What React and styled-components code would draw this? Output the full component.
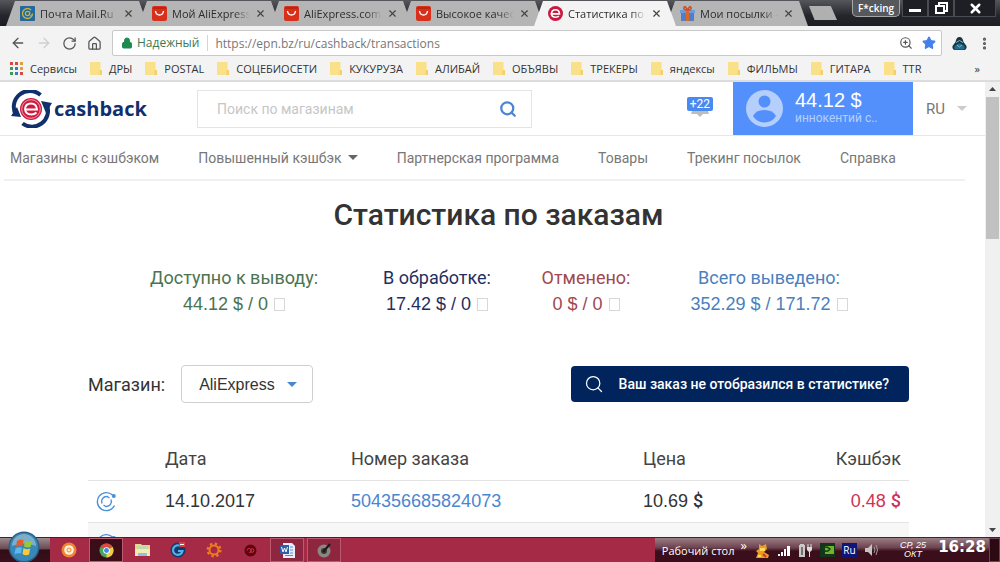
import React from 'react';
import styled, { createGlobalStyle, css } from 'styled-components';
import { ArrowLeft, ArrowRight, RotateCw, House, Lock, Star, ZoomIn, X, Search, EllipsisVertical } from 'lucide-react';

const GlobalStyle = createGlobalStyle`
  * {
    box-sizing: border-box;
  }

  body {
    margin: 0;
    background: #fff;
    font-family: Roboto, 'Liberation Sans', sans-serif;
    color: #333;
  }

  button, input, select {
    font: inherit;
    color: inherit;
    margin: 0;
    padding: 0;
    border: 0;
    background: none;
  }

  a {
    color: inherit;
    text-decoration: none;
  }
`;

const uiFont = css`
  font-family: 'Open Sans', 'Noto Sans', sans-serif;
`;

const Screen = styled.div`
  display: flex;
  flex-direction: column;
  height: 100vh;
  overflow: hidden;
`;

/* ---------- browser chrome ---------- */

const TabStrip = styled.div`
  ${uiFont}
  display: flex;
  align-items: flex-end;
  flex: none;
  height: 26px;
  padding-left: 6px;
  background: linear-gradient(#55575c, #24262b 60%, #1c1e24);
`;

const Tab = styled.div`
  display: flex;
  align-items: center;
  gap: 5px;
  flex: none;
  width: 142px;
  height: 25px;
  margin-right: -10px;
  padding: 0 14px;
  font-size: 11px;
  color: #2d2d2d;
  background: ${({ $active }) => ($active ? '#f3f3f3' : '#b5b5b5')};
  clip-path: polygon(0 100%, 9px 0, calc(100% - 9px) 0, 100% 100%);
  position: relative;
  z-index: ${({ $active }) => ($active ? 1 : 0)};
`;

const TabTitle = styled.button`
  flex: 1;
  min-width: 0;
  text-align: left;
  white-space: nowrap;
  overflow: hidden;
  mask-image: linear-gradient(to right, #000 80%, transparent);
`;

const TabClose = styled.button`
  display: flex;
  color: #444;
`;

const NewTab = styled.button`
  align-self: center;
  width: 28px;
  height: 14px;
  margin-left: 11px;
  background: #b0b0b0;
  clip-path: polygon(0 0, 78% 0, 100% 100%, 20% 100%);
`;

const WindowButtons = styled.div`
  display: flex;
  align-self: flex-start;
  margin-left: auto;
  margin-right: 4px;
`;

const UserBadge = styled.button`
  width: 48px;
  height: 17px;
  margin-right: 2px;
  border: 1px solid #a5a5a5;
  border-top: 0;
  border-radius: 0 0 5px 5px;
  background: #56585c;
  color: #fff;
  font-size: 10px;
  font-weight: 600;
  line-height: 15px;
`;

const WindowButton = styled.button`
  display: flex;
  align-items: center;
  justify-content: center;
  width: ${({ $wide }) => ($wide ? 42 : 26)}px;
  height: 17px;
  border: 1px solid #4a4c52;
  border-top: 0;
  background: #1d1f25;
  color: #fff;
`;

const Toolbar = styled.div`
  ${uiFont}
  display: flex;
  align-items: center;
  flex: none;
  height: 32px;
  padding: 2px 8px 0 10px;
  gap: 10px;
  background: #f3f3f3;
`;

const ToolButton = styled.button`
  display: flex;
  color: ${({ $dim }) => ($dim ? '#cfcfcf' : '#555')};
`;

const AddressBar = styled.div`
  display: flex;
  align-items: center;
  flex: 1;
  height: 26px;
  padding: 0 5px 0 8px;
  border: 1px solid #c9c9c9;
  border-radius: 2px;
  background: #fff;
  font-size: 12px;
  color: #3b7a55;
`;

const Secure = styled.span`
  padding: 0 8px 0 4px;
  margin-right: 7px;
  border-right: 1px solid #d5d5d5;
  line-height: 16px;
`;

const AddressInput = styled.input`
  flex: 1;
  min-width: 0;
  outline: none;
  color: #777;
`;

const AddressIcons = styled.div`
  display: flex;
  gap: 9px;
`;

const Bookmarks = styled.nav`
  ${uiFont}
  display: flex;
  align-items: center;
  flex: none;
  gap: 13px;
  height: 24px;
  padding: 0 20px 2px 10px;
  border-bottom: 2px solid #dcdcdc;
  background: #f3f3f3;
  font-size: 11px;
  white-space: nowrap;
`;

const Bookmark = styled.a`
  display: flex;
  align-items: center;
  gap: 7px;
`;

const More = styled.button`
  margin-left: auto;
`;

/* ---------- page ---------- */

const Viewport = styled.div`
  display: flex;
  flex: 1;
  min-height: 0;
`;

const Page = styled.div`
  flex: 1;
  min-width: 0;
  overflow: hidden;
`;

const Scrollbar = styled.div`
  display: flex;
  flex-direction: column;
  align-items: center;
  width: 15px;
  padding: 5px 1px;
  background: #f0f0f0;
`;

const ScrollThumb = styled.div`
  width: 100%;
  height: 32%;
  margin: 6px 0 auto;
  background: #c1c1c1;
`;

const Header = styled.header`
  display: flex;
  align-items: center;
  height: 54px;
  border-bottom: 1px solid #e6e6e6;
`;

const Logo = styled.a`
  display: flex;
  align-items: center;
  gap: 2px;
  width: 197px;
  padding-left: 11px;
  font-family: 'Open Sans', sans-serif;
  font-size: 20px;
  font-weight: 700;
  color: #10306b;
`;

const SearchBox = styled.form`
  display: flex;
  align-items: center;
  width: 335px;
  height: 38px;
  padding: 0 14px 0 19px;
  border: 1px solid #e4e4e4;
  color: #4a86cf;
`;

const SearchInput = styled.input`
  flex: 1;
  min-width: 0;
  outline: none;
  font-size: 14px;

  &::placeholder {
    color: #c6c6c6;
  }
`;

const SearchButton = styled.button`
  display: flex;
`;

const Notice = styled.button`
  display: flex;
  flex-direction: column;
  align-items: center;
  margin-left: auto;
  margin-right: 20px;
  padding-bottom: 4px;
`;

const NoticeCount = styled.span`
  padding: 0 3px;
  border-radius: 2px;
  background: #4a8af0;
  color: #fff;
  font-size: 12px;
  line-height: 14px;
`;

const Account = styled.a`
  display: flex;
  align-items: center;
  gap: 12px;
  width: 180px;
  height: 100%;
  padding-left: 13px;
  background: #5490fb;
  color: #b4cffb;
  font-size: 12px;
  line-height: 14px;
`;

const AccountText = styled.div`
  padding-bottom: 4px;
`;

const Balance = styled.div`
  font-family: 'Liberation Sans', sans-serif;
  font-size: 20px;
  line-height: 22px;
  color: #fff;
`;

const Language = styled.button`
  display: flex;
  align-items: center;
  gap: 12px;
  width: 72px;
  padding-left: 13px;
  font-size: 15px;
  color: #777;
`;

const MainNav = styled.nav`
  display: flex;
  align-items: center;
  gap: 39px;
  height: 45px;
  margin: 0 20px 0 4px;
  padding-left: 6px;
  border-bottom: 2px solid #f0f0f0;
  font-size: 14px;
  color: #777;
  white-space: nowrap;
`;

const NavItem = styled.a`
  display: flex;
  align-items: center;
  gap: 6px;
`;

const Caret = styled.span`
  border: 5px solid transparent;
  border-top-color: ${({ $color }) => $color};
  border-bottom: 0;
`;

const Content = styled.main`
  padding: 0 76px 0 88px;
`;

const Title = styled.h1`
  margin: 16px 0 0;
  font-size: 30px;
  font-weight: 500;
  line-height: 36px;
  text-align: center;
`;

const Stats = styled.div`
  display: grid;
  grid-template-columns: 240fr 166fr 132fr 234fr;
  margin-top: 32px;
  padding: 0 23px 0 26px;
`;

const Stat = styled.div`
  color: ${({ $color }) => $color};
  font-size: 18px;
  line-height: 26px;
  text-align: center;
  white-space: nowrap;
`;

const StatValue = styled.div`
  display: flex;
  align-items: center;
  justify-content: center;
  gap: 6px;
  font-family: 'Liberation Sans', sans-serif;
`;

const CurrencyBox = styled.span`
  width: 11px;
  height: 13px;
  border: 1px solid #d8d8d8;
`;

const Filters = styled.div`
  display: flex;
  align-items: center;
  margin-top: 48px;
  font-size: 18px;
`;

const ShopSelect = styled.div`
  position: relative;
  margin-left: 16px;

  select {
    appearance: none;
    width: 132px;
    height: 38px;
    padding-left: 17px;
    border: 1px solid #cfcfcf;
    border-radius: 4px;
    background: #fff;
    font-family: 'Liberation Sans', sans-serif;
    font-size: 16px;
  }

  span {
    position: absolute;
    right: 16px;
    top: 17px;
    pointer-events: none;
  }
`;

const LostOrder = styled.button`
  display: flex;
  align-items: center;
  gap: 15px;
  height: 36px;
  margin-left: auto;
  padding: 0 20px 0 13px;
  border-radius: 4px;
  background: #02245c;
  color: #fff;
  font-size: 14px;
  font-weight: 500;
`;

const Orders = styled.table`
  width: 100%;
  margin-top: 35px;
  border-collapse: collapse;
  table-layout: fixed;
  font-size: 18px;
  text-align: left;

  th {
    height: 42px;
    padding: 0;
    font-weight: 400;
    color: #444;
  }

  td {
    height: 42px;
    padding: 0;
    border-top: 1px solid #e3e3e3;
    font-family: 'Liberation Sans', sans-serif;
  }

  th:last-child, td:last-child {
    padding-right: 8px;
    text-align: right;
  }

  tbody tr:nth-child(even) {
    background: #f7f7f7;
  }

  svg {
    display: block;
    margin-left: 8px;
  }
`;

const OrderLink = styled.a`
  color: #4a86cf;
`;

const Cashback = styled.span`
  color: #cf3355;
`;

const Dollar = styled.b`
  font-family: Roboto, sans-serif;
  font-weight: 500;
`;

/* ---------- taskbar ---------- */

const Taskbar = styled.footer`
  ${uiFont}
  display: flex;
  flex: none;
  height: 25px;
  border-top: 1px solid #4f1c28;
  background: #a52a46;
  color: #fff;
`;

const StartArea = styled.div`
  display: flex;
  width: 50px;
  padding-left: 8px;
  background: linear-gradient(#9b8a8e, #6a4a52 45%, #310d17 50%, #3a101c);
`;

const StartButton = styled.button`
  display: flex;
  margin-top: -7px;
  height: 32px;
`;

const TaskButton = styled.button`
  display: flex;
  align-items: center;
  justify-content: center;
  width: 34px;
  margin-left: ${({ $open }) => ($open ? 3 : 2)}px;
  border: 1px solid ${({ $open }) => ($open ? '#bb5a70' : 'transparent')};
  background: ${({ $active, $open }) => ($active ? '#3a0d18' : $open ? '#8f2640' : 'none')};
`;

const Tray = styled.div`
  display: flex;
  align-items: center;
  margin-left: auto;
  padding-left: 7px;
  background: linear-gradient(#9b7f86, #6d4350 40%, #3a0f1b 55%, #3a0f1b);
  font-size: 11px;
  white-space: nowrap;
`;

const TrayIcons = styled.div`
  display: flex;
  align-items: center;
  gap: 7px;
  margin: 0 19px 0 8px;
`;

const Chevron = styled.span`
  align-self: flex-start;
  margin-left: 6px;
  font-size: 13px;
  line-height: 14px;
`;

const Layout = styled.span`
  width: 15px;
  background: #10157c;
  font-size: 10px;
  line-height: 14px;
  text-align: center;
`;

const TrayDate = styled.div`
  display: flex;
  flex-direction: column;
  width: 30px;
  font-family: 'Liberation Sans', sans-serif;
  font-size: 9px;
  font-style: italic;
  line-height: 9px;
  text-align: center;
`;

const Clock = styled.div`
  width: 54px;
  margin-left: 7px;
  padding-bottom: 6px;
  font-family: 'DejaVu Sans', sans-serif;
  font-size: 15px;
  font-weight: 700;
  line-height: 18px;
  text-align: center;
`;

const ShowDesktop = styled.button`
  align-self: stretch;
  width: 11px;
  border: 1px solid #6d4350;
  background: #2c0a14;
`;

/* ---------- icons ---------- */

const MailIcon = () => (
  <svg width="15" height="15" viewBox="0 0 15 15">
    <rect width="15" height="15" rx="1" fill="#23689f" />
    <circle cx="7.5" cy="7.5" r="5" fill="none" stroke="#c9b23c" strokeWidth="1.3" strokeDasharray="27 5" />
    <circle cx="7.5" cy="7.5" r="2.1" fill="none" stroke="#c9b23c" strokeWidth="1.3" />
    <path d="M9.7 5.5v3q.6 1.7 2.2.3" fill="none" stroke="#c9b23c" />
  </svg>
);

const AliIcon = () => (
  <svg width="15" height="15" viewBox="0 0 15 15">
    <rect width="15" height="15" rx="2" fill="#d9301b" />
    <path d="M1 1h13v2H1z" fill="#b92712" />
    <path d="M3.5 5q.5 4 4 4t4-4" fill="none" stroke="#fff" strokeWidth="1.4" />
  </svg>
);

const EpnIcon = () => (
  <svg width="15" height="15" viewBox="0 0 15 15">
    <circle cx="7.5" cy="7.5" r="7.5" fill="#cc1840" />
    <path d="M2.500 7.900h9q-.2-4.200-4-4.200T3.600 7.500t4.200 3.800q2 0 3-1.200" fill="none" stroke="#fff" strokeWidth="1.600" />
  </svg>
);

const GiftIcon = () => (
  <svg width="15" height="15" viewBox="0 0 15 15">
    <rect x="1" y="6" width="13" height="9" fill="#4f7fc4" />
    <rect y="4" width="15" height="3" fill="#6f9ad6" />
    <rect x="6" y="4" width="3" height="11" fill="#d9682f" />
    <path d="M7.500 4Q3 4 4 1.500T7.500 4Q12 4 11 1.500T7.500 4z" fill="none" stroke="#c9502a" strokeWidth="1.5" />
  </svg>
);

const AppsIcon = () => {
  const colors = ['#d64b3c', '#d64b3c', '#e0a03a', '#3c9b5c', '#3f78c9', '#e0a03a', '#3c9b5c', '#3f78c9', '#d64b3c'];
  return (
    <svg width="13" height="13" viewBox="0 0 13 13">
      {colors.map((c, i) => (
        <rect key={i} x={(i % 3) * 5} y={Math.floor(i / 3) * 5} width="3" height="3" fill={c} />
      ))}
    </svg>
  );
};

const FolderIcon = () => (
  <svg width="12" height="13" viewBox="0 0 12 13">
    <path d="M0 0h10.500v8H12v5H0z" fill="#fbe08a" />
    <path d="M9.500 8H12v5H9.500z" fill="#f2d06c" />
  </svg>
);

const ExtensionIcon = () => (
  <svg width="15" height="15" viewBox="0 0 15 15">
    <path d="M7.500 1C10 1 11 3 11.500 6l3 4q.5 3-2 4h-10q-2.500-1-2-4l3-4C4 3 5 1 7.500 1z" fill="#1b3442" />
    <path d="M2.500 10l5-3 5 3v3.500h-10z" fill="#1c6d98" />
    <path d="M4 6.500l3.500-2 3.500 2M5 9l2.500 2L10 9" fill="none" stroke="#8eb5c4" />
  </svg>
);

const LogoMark = () => (
  <svg width="41" height="38" viewBox="0 0 41 38">
    <path d="M5 25A16 16 0 0 1 29.500 5" fill="none" stroke="#10306b" strokeWidth="4" />
    <path d="M36 15A16 16 0 0 1 11.500 33.500" fill="none" stroke="#10306b" strokeWidth="4" />
    <path d="M0 26l10 1-4-10zM30 11l11 2-6 10z" fill="#10306b" />
    <circle cx="20" cy="19" r="11" fill="#d0193d" />
    <circle cx="20" cy="19" r="9.300" fill="none" stroke="#f3c4cd" strokeWidth=".8" />
    <path d="M14 19.500h12q-.5-6-6-6t-6 5.500q.5 5.500 6.500 5.500 3 0 5-2" fill="none" stroke="#fff" strokeWidth="2" />
  </svg>
);

const AvatarIcon = () => (
  <svg width="37" height="37" viewBox="0 0 37 37">
    <circle cx="18.500" cy="18.500" r="18.500" fill="#b4cffb" />
    <circle cx="18.500" cy="11.500" r="6" fill="#5490fb" />
    <path d="M7 26q3-6 11.500-6T30 26q-4 6.500-11.500 6.500T7 26z" fill="#5490fb" />
  </svg>
);

const StatusIcon = () => (
  <svg width="21" height="21" viewBox="0 0 21 21" fill="none" stroke="#4a90d9" strokeWidth="1.400">
    <path d="M16.500 4A9 9 0 1 0 18.500 14.500" />
    <circle cx="17.800" cy="5" r="1.300" fill="#4a90d9" />
    <path d="M6 12.500a5 5 0 0 1 5-7l2.500 1.500M15 8.500a5 5 0 0 1-5 7L7.500 14" />
  </svg>
);

const WindowsOrb = () => (
  <svg width="32" height="32" viewBox="0 0 32 32">
    <circle cx="16" cy="16" r="15.500" fill="#2e5f86" />
    <circle cx="16" cy="16" r="14" fill="#3688b8" />
    <path d="M4 15a12 12 0 0 1 24 0q-12-5-24 0z" fill="#8fb8cc" opacity=".8" />
    <path d="M9 10q3-2.500 6.500-1l-1 6Q11 14 8 16z" fill="#e8592b" />
    <path d="M17 9.500q3 2 7 .5l-1.500 6q-3 1-6.500-.500z" fill="#97c93d" />
    <path d="M7.500 17.500q3-2 6.500-1l-1 6q-3.500-1-6.500 1z" fill="#5fb8ea" />
    <path d="M15.500 17q3.500 2 6.700.6l-1.200 6q-3.500 1.400-6.500-.600z" fill="#f9ca3a" />
  </svg>
);

const OrangeDisc = () => (
  <svg width="16" height="16" viewBox="0 0 16 16">
    <circle cx="8" cy="8" r="7.500" fill="#ef8532" />
    <circle cx="8" cy="8" r="4.800" fill="#fff0d8" />
    <circle cx="8" cy="8" r="2" fill="none" stroke="#ef8532" />
  </svg>
);

const ChromeIcon = () => (
  <svg width="15" height="15" viewBox="0 0 16 16">
    <circle cx="8" cy="8" r="7.500" fill="#45a85a" />
    <path d="M8 8L1.500 4.300A7.500 7.500 0 0 1 14.500 4.300z" fill="#dd4b3e" />
    <path d="M8 8l6.500-3.700A7.500 7.500 0 0 1 8 15.500z" fill="#f4cb3f" />
    <circle cx="8" cy="8" r="3.500" fill="#fff" />
    <circle cx="8" cy="8" r="2.600" fill="#4286e8" />
  </svg>
);

const ExplorerIcon = () => (
  <svg width="17" height="14" viewBox="0 0 17 14">
    <path d="M1 1h6l1 1h8v11H1z" fill="#e9d58c" />
    <path d="M3 3h11v4H3z" fill="#b7ddb0" />
    <path d="M1 6h15v7H1z" fill="#f6e9b1" />
    <path d="M4 10h9v3H4z" fill="#91bfdf" />
  </svg>
);

const CIcon = () => (
  <svg width="16" height="16" viewBox="0 0 16 16">
    <circle cx="8" cy="8" r="7.500" fill="#143b6e" />
    <path d="M11 4.500A4.800 4.800 0 1 0 12.500 9H8" fill="none" stroke="#58aee8" strokeWidth="2.200" />
    <path d="M9 0h6v5H9z" fill="#d9414a" />
    <path d="M10 2.500h4" stroke="#fff" />
  </svg>
);

const GearIcon = () => (
  <svg width="16" height="16" viewBox="0 0 16 16" fill="none" stroke="#ee7a22">
    <circle cx="8" cy="8" r="4.500" strokeWidth="2" />
    <circle cx="8" cy="8" r="6.300" strokeWidth="2.400" strokeDasharray="2.400 2.550" />
  </svg>
);

const DarkDisc = () => (
  <svg width="13" height="13" viewBox="0 0 13 13">
    <circle cx="6.500" cy="6.500" r="6" fill="#5d0612" />
    <path d="M3 6.500a2 2 0 1 1 2 2M7 9V5q3-1 3 1.500T7 8" fill="none" stroke="#db2635" />
  </svg>
);

const WordIcon = () => (
  <svg width="15" height="15" viewBox="0 0 15 15">
    <path d="M3 0h9l3 3v12H3z" fill="#e9eff9" />
    <path d="M10 4h3M10 7h3M10 10h3M5 12.500h8" stroke="#6189c4" />
    <rect y="2" width="9" height="9" fill="#2d5eac" />
    <path d="M1.500 4l1.500 5 1.500-4L6 9l1.500-5" fill="none" stroke="#fff" />
  </svg>
);

const PenDisc = () => (
  <svg width="15" height="15" viewBox="0 0 15 15">
    <circle cx="7" cy="8" r="6.500" fill="#8a8680" />
    <circle cx="7" cy="8" r="3" fill="#3b3836" />
    <path d="M6 9l7-8" stroke="#191919" strokeWidth="2" />
  </svg>
);

const CatIcon = () => (
  <svg width="15" height="15" viewBox="0 0 15 15">
    <path d="M4 1l3 2 4-2 1 5-3 3 5 3-1 3H1l2-5-2-2 3-2z" fill="#f09a20" />
    <path d="M5 5h5v3H5zM3 12h3v2H3z" fill="#fbd75b" />
    <path d="M8 11l3 3" stroke="#cd3a1d" strokeWidth="2" />
  </svg>
);

const SignalIcon = () => (
  <svg width="14" height="12" viewBox="0 0 14 12" fill="#fff">
    <path d="M1 10h2v2H1zM4 8h2v4H4zM7 5h2v7H7zM10 2h3v10h-3z" />
  </svg>
);

const PowerIcon = () => (
  <svg width="15" height="14" viewBox="0 0 15 14">
    <path d="M2 1h4v1h1v12H1V2h1z" fill="#c9c9c9" />
    <path d="M3 4h2v8H3z" fill="#76706f" />
    <path d="M10 1v4M13 1v4" fill="none" stroke="#ddd" />
    <path d="M9 4h5v3l-2 2v5h-1V9L9 7z" fill="#ddd" />
  </svg>
);

const NvidiaIcon = () => (
  <svg width="15" height="14" viewBox="0 0 15 14">
    <rect width="15" height="14" fill="#13361a" />
    <path d="M5 3h9v8H5z" fill="#6fb42c" />
    <path d="M2 6q4-4 8 0-3 4-6 1" fill="none" stroke="#173d16" strokeWidth="1.500" />
  </svg>
);

const SpeakerIcon = () => (
  <svg width="15" height="14" viewBox="0 0 15 14">
    <path d="M1 5h3l4-4v12L4 9H1z" fill="#c7c2c3" />
    <path d="M10 4q2 3 0 6M12 2q3 5 0 10" fill="none" stroke="#a39a9c" />
  </svg>
);

const tabs = [
  { title: 'Почта Mail.Ru', icon: MailIcon },
  { title: 'Мой AliExpress', icon: AliIcon },
  { title: 'AliExpress.com', icon: AliIcon },
  { title: 'Высокое качес', icon: AliIcon },
  { title: 'Статистика по', icon: EpnIcon, active: true },
  { title: 'Мои посылки -', icon: GiftIcon },
];

const bookmarks = ['ДРЫ', 'POSTAL', 'СОЦЕБИОСЕТИ', 'КУКУРУЗА', 'АЛИБАЙ', 'ОБЪЯВЫ', 'ТРЕКЕРЫ', 'яндексы', 'ФИЛЬМЫ', 'ГИТАРА', 'TTR'];

const navItems = [
  { label: 'Магазины с кэшбэком' },
  { label: 'Повышенный кэшбэк', menu: true },
  { label: 'Партнерская программа' },
  { label: 'Товары' },
  { label: 'Трекинг посылок' },
  { label: 'Справка' },
];

const stats = [
  { label: 'Доступно к выводу:', value: '44.12 $ / 0', color: '#4a7350' },
  { label: 'В обработке:', value: '17.42 $ / 0', color: '#1f2f5f' },
  { label: 'Отменено:', value: '0 $ / 0', color: '#a04850' },
  { label: 'Всего выведено:', value: '352.29 $ / 171.72', color: '#4a80bd' },
];

const tasks = [
  { name: 'Плеер', icon: OrangeDisc },
  { name: 'Chrome', icon: ChromeIcon, open: true, active: true },
  { name: 'Проводник', icon: ExplorerIcon },
  { name: 'CCleaner', icon: CIcon },
  { name: 'Настройки', icon: GearIcon },
  { name: 'Запись', icon: DarkDisc },
  { name: 'Word', icon: WordIcon, open: true },
  { name: 'Редактор', icon: PenDisc, open: true },
];

export default function App() {
  return (
    <Screen>
      <GlobalStyle />

      <TabStrip>
        {tabs.map(({ title, icon: Icon, active }) => (
          <Tab key={title} $active={active}>
            <Icon />
            <TabTitle>{title}</TabTitle>
            <TabClose aria-label="Закрыть"><X size={11} strokeWidth={2.5} /></TabClose>
          </Tab>
        ))}
        <NewTab aria-label="Новая вкладка" />
        <WindowButtons>
          <UserBadge>F*cking</UserBadge>
          <WindowButton aria-label="Свернуть">
            <svg width="12" height="10"><path d="M0 6h12v3H0z" fill="#fff" /></svg>
          </WindowButton>
          <WindowButton aria-label="Развернуть">
            <svg width="13" height="12" fill="none" stroke="#fff" strokeWidth="2">
              <path d="M4 3V1h8v8h-2M1 4h8v7H1z" />
            </svg>
          </WindowButton>
          <WindowButton aria-label="Закрыть окно" $wide>
            <X size={15} strokeWidth={4} />
          </WindowButton>
        </WindowButtons>
      </TabStrip>

      <Toolbar>
        <ToolButton aria-label="Назад"><ArrowLeft size={16} /></ToolButton>
        <ToolButton aria-label="Вперед" $dim><ArrowRight size={16} /></ToolButton>
        <ToolButton aria-label="Обновить"><RotateCw size={15} /></ToolButton>
        <ToolButton aria-label="Домой"><House size={15} /></ToolButton>
        <AddressBar>
          <Lock size={12} fill="#1f8a50" color="#1f8a50" />
          <Secure>Надежный</Secure>
          <AddressInput aria-label="Адрес" defaultValue="https://epn.bz/ru/cashback/transactions" />
          <AddressIcons>
            <ZoomIn size={14} color="#555" />
            <Star size={14} fill="#4580ea" color="#4580ea" />
          </AddressIcons>
        </AddressBar>
        <ToolButton aria-label="Расширение"><ExtensionIcon /></ToolButton>
        <ToolButton aria-label="Меню"><EllipsisVertical size={15} strokeWidth={3} /></ToolButton>
      </Toolbar>

      <Bookmarks>
        <Bookmark href="#"><AppsIcon />Сервисы</Bookmark>
        {bookmarks.map((name) => (
          <Bookmark key={name} href="#"><FolderIcon />{name}</Bookmark>
        ))}
        <More>»</More>
      </Bookmarks>

      <Viewport>
        <Page>
          <Header>
            <Logo href="#"><LogoMark />cashback</Logo>
            <SearchBox>
              <SearchInput aria-label="Поиск" placeholder="Поиск по магазинам" />
              <SearchButton type="button" aria-label="Найти"><Search size={18} strokeWidth={3} /></SearchButton>
            </SearchBox>
            <Notice aria-label="Уведомления">
              <NoticeCount>+22</NoticeCount>
              <svg width="18" height="6"><path d="M1 0h16l1 3h-6l-3 3-3-3H0z" fill="#bdbdbd" /></svg>
            </Notice>
            <Account href="#">
              <AvatarIcon />
              <AccountText>
                <Balance>44.12 $</Balance>
                иннокентий с..
              </AccountText>
            </Account>
            <Language>RU <Caret $color="#ccc" /></Language>
          </Header>

          <MainNav>
            {navItems.map(({ label, menu }) => (
              <NavItem key={label} href="#">
                {label}
                {menu && <Caret $color="#666" />}
              </NavItem>
            ))}
          </MainNav>

          <Content>
            <Title>Статистика по заказам</Title>

            <Stats>
              {stats.map(({ label, value, color }) => (
                <Stat key={label} $color={color}>
                  {label}
                  <StatValue>{value}<CurrencyBox /></StatValue>
                </Stat>
              ))}
            </Stats>

            <Filters>
              <label htmlFor="shop">Магазин:</label>
              <ShopSelect>
                <select id="shop">
                  <option>AliExpress</option>
                </select>
                <Caret $color="#4a86cf" />
              </ShopSelect>
              <LostOrder>
                <Search size={20} strokeWidth={1.5} />
                Ваш заказ не отобразился в статистике?
              </LostOrder>
            </Filters>

            <Orders>
              <colgroup>
                <col width="77" />
                <col width="186" />
                <col width="292" />
                <col width="133" />
                <col width="133" />
              </colgroup>
              <thead>
                <tr>
                  <th />
                  <th>Дата</th>
                  <th>Номер заказа</th>
                  <th>Цена</th>
                  <th>Кэшбэк</th>
                </tr>
              </thead>
              <tbody>
                <tr>
                  <td><StatusIcon /></td>
                  <td>14.10.2017</td>
                  <td><OrderLink href="#">504356685824073</OrderLink></td>
                  <td>10.69 <Dollar>$</Dollar></td>
                  <td><Cashback>0.48 <Dollar>$</Dollar></Cashback></td>
                </tr>
                <tr>
                  <td><StatusIcon /></td>
                  <td />
                  <td />
                  <td />
                  <td />
                </tr>
              </tbody>
            </Orders>
          </Content>
        </Page>
        <Scrollbar>
          <svg width="7" height="4"><path d="M0 4l3.500-4L7 4z" fill="#444" /></svg>
          <ScrollThumb />
          <svg width="7" height="4"><path d="M0 0l3.500 4L7 0z" fill="#444" /></svg>
        </Scrollbar>
      </Viewport>

      <Taskbar>
        <StartArea>
          <StartButton aria-label="Пуск"><WindowsOrb /></StartButton>
        </StartArea>
        {tasks.map(({ name, icon: Icon, open, active }) => (
          <TaskButton key={name} aria-label={name} $open={open} $active={active}>
            <Icon />
          </TaskButton>
        ))}
        <Tray>
          Рабочий стол
          <Chevron>»</Chevron>
          <TrayIcons>
            <CatIcon />
            <SignalIcon />
            <PowerIcon />
            <NvidiaIcon />
            <Layout>Ru</Layout>
            <SpeakerIcon />
          </TrayIcons>
          <TrayDate>
            <span>СР, 25</span>
            <span>ОКТ</span>
          </TrayDate>
          <Clock>16:28</Clock>
          <ShowDesktop aria-label="Показать рабочий стол" />
        </Tray>
      </Taskbar>
    </Screen>
  );
}
